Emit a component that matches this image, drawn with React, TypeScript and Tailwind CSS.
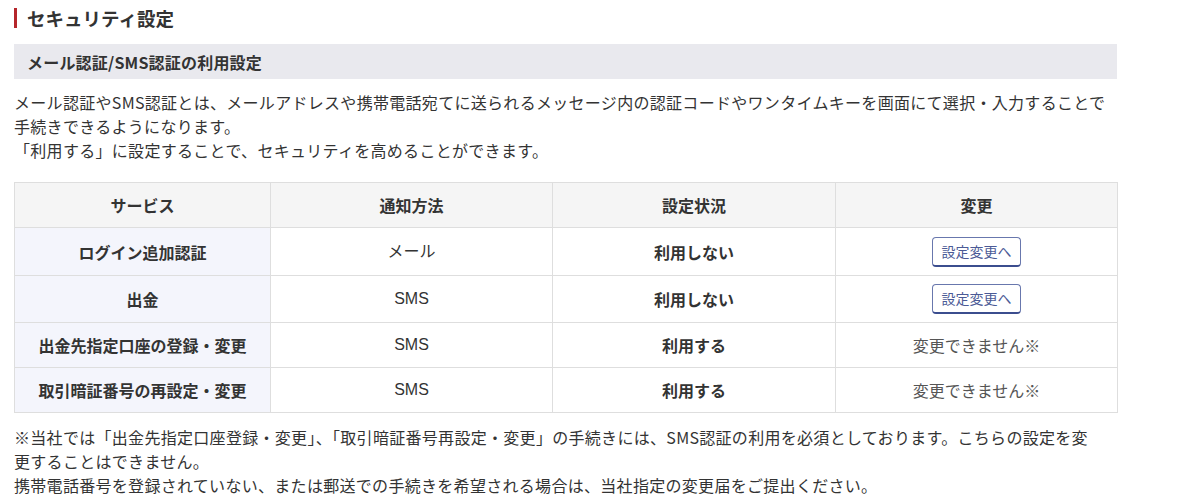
const jp = "font-['Noto_Sans_CJK_JP','Noto_Sans',sans-serif]"

const rows = [
  { name: "ログイン追加認証", method: "メール", status: "利用しない", button: true, h: "h-[48px]" },
  { name: "出金", method: "SMS", status: "利用しない", button: true, h: "h-[47px]" },
  { name: "出金先指定口座の登録・変更", method: "SMS", status: "利用する", button: false, h: "h-[45px]" },
  { name: "取引暗証番号の再設定・変更", method: "SMS", status: "利用する", button: false, h: "h-[45px]" },
]

const App = () => {
  return (
    <div className={`${jp} bg-white text-[#333] w-[1200px] h-[502px] overflow-hidden`}>
      <div className="ml-[14px] w-[1103px] pt-[6px]">
        {/* 見出し */}
        <div className="flex items-center gap-[10px] h-[24px]">
          <div className="w-[3px] h-[20px] bg-[#b5262b]"></div>
          <h1 className="text-[18.5px] font-bold leading-[24px] text-[#333]">セキュリティ設定</h1>
        </div>

        <div className="mt-[14px] h-[35px] bg-[#e9e9ee] flex items-center px-[13px]">
          <h2 className="text-[16px] font-bold text-[#333] tracking-[0.2px]">メール認証/SMS認証の利用設定</h2>
        </div>

        <p className="mt-[11px] text-[16px] leading-[24px] text-[#333] tracking-[0.3px]">
          メール認証やSMS認証とは、メールアドレスや携帯電話宛てに送られるメッセージ内の認証コードやワンタイムキーを画面にて選択・入力することで
          <br />
          手続きできるようになります。
          <br />
          「利用する」に設定することで、セキュリティを高めることができます。
        </p>

        {/* テーブル */}
        <table className="mt-[20px] w-[1103px] table-fixed border-collapse text-center">
          <colgroup>
            <col className="w-[256px]" />
            <col className="w-[282px]" />
            <col className="w-[283px]" />
            <col className="w-[282px]" />
          </colgroup>
          <thead>
            <tr className="h-[45px] bg-[#f5f5f5]">
              <th className="border border-[#dedede] text-[16px] font-bold">サービス</th>
              <th className="border border-[#dedede] text-[16px] font-bold">通知方法</th>
              <th className="border border-[#dedede] text-[16px] font-bold">設定状況</th>
              <th className="border border-[#dedede] text-[16px] font-bold">変更</th>
            </tr>
          </thead>
          <tbody>
            {rows.map((r) => (
              <tr key={r.name} className={r.h}>
                <td className="border border-[#dedede] bg-[#f4f5fc] text-[16px] font-bold">{r.name}</td>
                <td className="border border-[#dedede] text-[16px] font-['Liberation_Sans','Noto_Sans_CJK_JP',sans-serif]">
                  {r.method}
                </td>
                <td className="border border-[#dedede] text-[16px] font-bold">{r.status}</td>
                <td className="border border-[#dedede] text-[16px]">
                  {r.button ? (
                    <button className="inline-flex items-center justify-center w-[89px] h-[30px] rounded-[4px] border border-[#6877ad] border-b-2 border-b-[#3b4d8e] bg-white text-[14px] text-[#4b5a96]">
                      設定変更へ
                    </button>
                  ) : (
                    <span className="text-[#555]">変更できません※</span>
                  )}
                </td>
              </tr>
            ))}
          </tbody>
        </table>

        <p className="mt-[12px] text-[16px] leading-[24px] text-[#333] tracking-[0.3px]">
          ※当社では「出金先指定口座登録・変更」、「取引暗証番号再設定・変更」の手続きには、SMS認証の利用を必須としております。こちらの設定を変
          <br />
          更することはできません。
          <br />
          携帯電話番号を登録されていない、または郵送での手続きを希望される場合は、当社指定の変更届をご提出ください。
        </p>
      </div>
    </div>
  )
}

export default App
